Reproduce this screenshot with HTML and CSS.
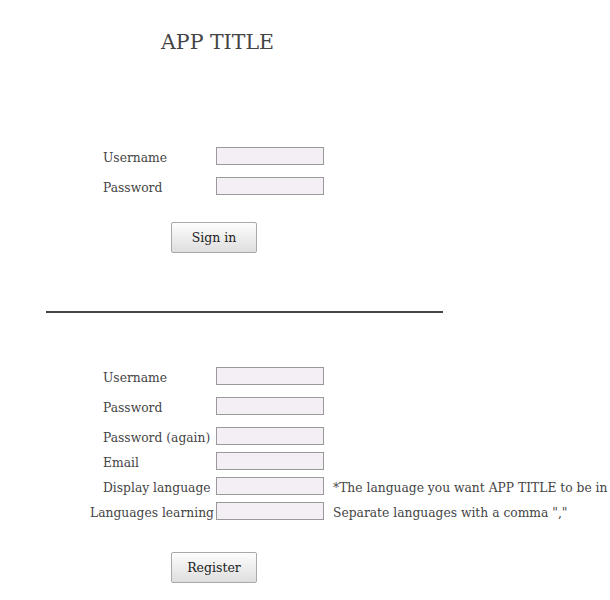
FILE: index.html
```html
<!DOCTYPE html>
<html>
<head>
<meta charset="utf-8">
<link rel="stylesheet" href="styles.css">
</head>
<body>
<div class="page">
  <h1 class="title">APP TITLE</h1>

  <form class="form login">
    <div class="row"><label class="lbl">Username</label><input class="field" type="text"></div>
    <div class="row"><label class="lbl">Password</label><input class="field" type="password"></div>
    <div class="actions"><button class="btn" type="button">Sign in</button></div>
  </form>

  <hr class="divider">

  <form class="form register">
    <div class="row"><label class="lbl">Username</label><input class="field" type="text"></div>
    <div class="row"><label class="lbl">Password</label><input class="field" type="password"></div>
    <div class="row tight"><label class="lbl">Password (again)</label><input class="field" type="password"></div>
    <div class="row tight"><label class="lbl">Email</label><input class="field" type="text"></div>
    <div class="row tight"><label class="lbl">Display language</label><input class="field" type="text"><span class="hint">*The language you want APP TITLE to be in</span></div>
    <div class="row tight"><label class="lbl wide">Languages learning</label><input class="field" type="text"><span class="hint">Separate languages with a comma ","</span></div>
    <div class="actions reg"><button class="btn" type="button">Register</button></div>
  </form>
</div>
</body>
</html>
```

FILE: styles.css
```css
html, body {
  margin: 0;
  padding: 0;
  background: #ffffff;
}
body {
  font-family: "DejaVu Serif", "Liberation Serif", serif;
  color: #444444;
  font-size: 12.3px;
}
.page {
  width: 610px;
  overflow: hidden;
}
.title {
  margin: 29px 0 0 0;
  width: 435px;
  text-align: center;
  font-weight: normal;
  font-size: 20.5px;
  line-height: 26px;
  color: #444;
}
.form {
  display: flex;
  flex-direction: column;
  padding-left: 103px;
}
.login {
  margin-top: 92px;
  gap: 12px;
}
.row {
  display: flex;
  align-items: center;
  height: 18px;
}
.register {
  margin-top: 54px;
}
.register .row { margin-bottom: 12px; }
.register .row.tight { margin-bottom: 7px; }
.lbl {
  width: 113px;
  flex: none;
  white-space: nowrap;
  padding-top: 4px;
  box-sizing: border-box;
}
.lbl.wide {
  margin-left: -13px;
  width: 126px;
  padding-right: 4px;
  text-align: right;
}
.field {
  box-sizing: border-box;
  width: 108px;
  height: 18px;
  margin: 0;
  padding: 0 2px;
  border: 1px solid #999999;
  background: #f4eff5;
  font: inherit;
  flex: none;
}
.hint {
  margin-left: 9px;
  white-space: nowrap;
  padding-top: 4px;
}
.actions {
  padding-left: 68px;
  margin-top: 15px;
}
.actions.reg {
  margin-top: 25px;
}
.btn {
  width: 86px;
  height: 31px;
  border: 1px solid #a9a9a9;
  border-radius: 2px;
  background: linear-gradient(#fdfdfd, #dedede);
  font-family: inherit;
  font-size: 12.5px;
  color: #222;
  padding: 0;
}
.divider {
  margin: 58px 0 0 46px;
  width: 397px;
  height: 2px;
  border: 0;
  background: #444;
}
```
